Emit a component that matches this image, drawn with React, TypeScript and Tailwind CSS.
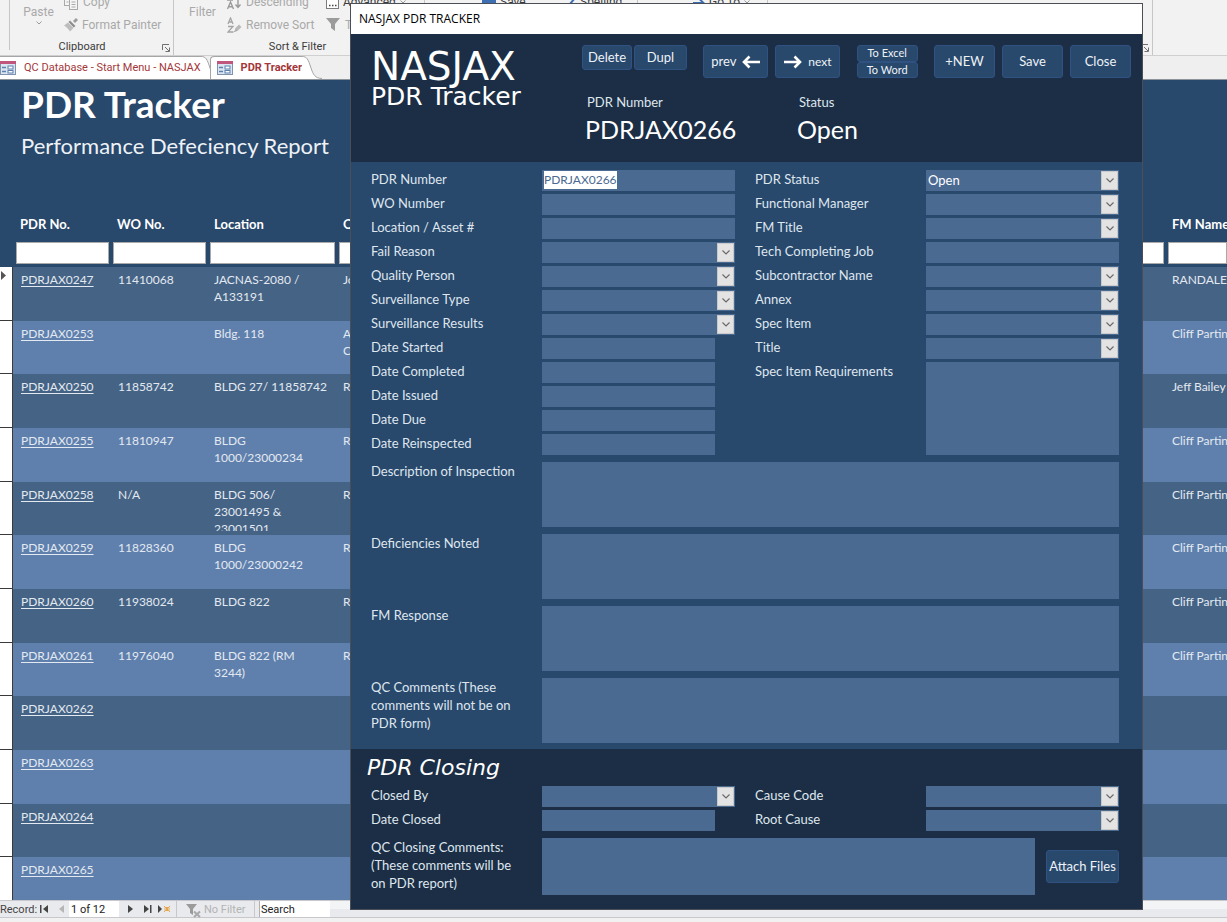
import type { ReactNode } from "react";

const bodyFont = "font-['Lato','Noto_Sans',sans-serif]";
const uiFont = "font-['Roboto','Open_Sans',sans-serif]";
const titleFont = "font-['Open_Sans','Noto_Sans',sans-serif]";
const wideFont = "font-['DejaVu_Sans',sans-serif]";

type Row = { id: string; wo?: string; location?: string; quality?: string; fm?: string };

const rows: Row[] = [
  { id: "PDRJAX0247", wo: "11410068", location: "JACNAS-2080 /\nA133191", quality: "Jo", fm: "RANDALE" },
  { id: "PDRJAX0253", location: "Bldg. 118", quality: "A\nC", fm: "Cliff Partin" },
  { id: "PDRJAX0250", wo: "11858742", location: "BLDG 27/ 11858742", quality: "R", fm: "Jeff Bailey" },
  { id: "PDRJAX0255", wo: "11810947", location: "BLDG\n1000/23000234", quality: "R", fm: "Cliff Partin" },
  { id: "PDRJAX0258", wo: "N/A", location: "BLDG 506/\n23001495 &\n23001501", quality: "R", fm: "Cliff Partin" },
  { id: "PDRJAX0259", wo: "11828360", location: "BLDG\n1000/23000242", quality: "R", fm: "Cliff Partin" },
  { id: "PDRJAX0260", wo: "11938024", location: "BLDG 822", quality: "R", fm: "Cliff Partin" },
  { id: "PDRJAX0261", wo: "11976040", location: "BLDG 822 (RM\n3244)", quality: "R", fm: "Cliff Partin" },
  { id: "PDRJAX0262" },
  { id: "PDRJAX0263" },
  { id: "PDRJAX0264" },
  { id: "PDRJAX0265" },
];

/* ---------- Icons ---------- */

function FormIcon() {
  return (
    <svg width="16" height="16" viewBox="0 0 16 16" className="shrink-0">
      <rect x="0.5" y="1.5" width="15" height="13" fill="#dce6f2" stroke="#7f93ad" />
      <rect x="0" y="1" width="16" height="3" fill="#c0567e" />
      <path d="M2 7.5h4M2 11.5h4" stroke="#5b7fae" strokeWidth="1.4" />
      <rect x="8" y="6" width="5" height="3" fill="#fff" stroke="#5b7fae" />
      <rect x="8" y="10.5" width="5" height="2.5" fill="#fff" stroke="#5b7fae" />
    </svg>
  );
}

function CopyIcon() {
  return (
    <svg width="15" height="16" viewBox="0 0 15 16" fill="#f5f5f5" stroke="#a9a9a9">
      <rect x="0.5" y="0.5" width="8" height="11" />
      <rect x="5.500" y="4.500" width="8" height="11" />
      <path d="M7.500 8h4M7.500 10.500h4M7.500 13h4M2.500 8h2" />
    </svg>
  );
}

function PainterIcon() {
  return (
    <svg width="14" height="14" viewBox="0 0 14 14">
      <path d="M9 3l3-3 2 2-3 3z" fill="#9c9c9c" />
      <path d="M6 2.500l5.500 5.500-1.800 1.500L4.500 4z" fill="#8e8e8e" />
      <path d="M4 4.500L9.500 10 6 13.500C4.500 11 2.500 9 0 7.500z" fill="#bdbdbd" />
    </svg>
  );
}

function DescendingIcon() {
  return (
    <svg width="15" height="16" viewBox="0 0 15 16" fill="none" stroke="#9a9a9a" strokeWidth="1.4">
      <path d="M1 6V1h5L1 6h5" />
      <path d="M0.500 15L3.500 8l3 7M1.500 12.800h4" />
      <path d="M11 1v12M8.500 10.500l2.500 3 2.500-3" />
    </svg>
  );
}

function RemoveSortIcon() {
  return (
    <svg width="15" height="16" viewBox="0 0 15 16" fill="none" stroke="#a4a4a4" strokeWidth="1.3">
      <path d="M1 7L3.500 1 6 7M2 5h3" />
      <path d="M1 9.500h5L1 15h5.500" />
      <path d="M8 11.500l4-4 2.500 2.500-4 4H8z" fill="#b9b9b9" stroke="none" />
      <path d="M7 14.500l3-1" />
    </svg>
  );
}

function FunnelIcon({ crossed = false }: { crossed?: boolean }) {
  return (
    <svg width="15" height="15" viewBox="0 0 15 15" className="shrink-0">
      <path d={crossed ? "M0 1h11L7 6v6l-3-2V6z" : "M0 1h14L9 7v7l-4-3V7z"} fill="#9b9b9b" />
      {crossed && <path d="M8 8.500l6 5.500M14 8.500L8 14" stroke="#a9a9a9" strokeWidth="2" />}
    </svg>
  );
}

function AdvancedIcon() {
  return (
    <svg width="13" height="14" viewBox="0 0 13 14">
      <rect x="0.500" y="0.500" width="12" height="13" fill="#fff" stroke="#7d7d7d" />
      <path d="M3 10.500h1.500M6 10.500h1.500M9 10.500h1.500" stroke="#444" strokeWidth="1.500" />
    </svg>
  );
}

function SaveIcon() {
  return (
    <svg width="14" height="14" viewBox="0 0 14 14">
      <path d="M0 0h14v14H2l-2-2z" fill="#3f6fb3" />
      <path d="M5 8h7v6H5z" fill="#b28ac4" />
    </svg>
  );
}

function SpellingIcon() {
  return (
    <svg width="14" height="14" viewBox="0 0 14 14" fill="none" stroke="#3f6fb3" strokeWidth="2">
      <path d="M1 9l4 3.500L13 3" />
    </svg>
  );
}

function GoToIcon() {
  return (
    <svg width="12" height="12" viewBox="0 0 12 12" fill="none" stroke="#3f6fb3" strokeWidth="2">
      <path d="M0 7h10M6.500 3l4 4-4 4" />
    </svg>
  );
}

function LauncherIcon() {
  return (
    <svg width="8" height="8" viewBox="0 0 8 8" fill="none" stroke="#707070">
      <path d="M0.500 6V0.500H7M3 3l4 4M7.500 3.500v4h-4" />
    </svg>
  );
}

function Caret() {
  return (
    <svg width="6" height="4" viewBox="0 0 6 4" fill="none" stroke="#9a9a9a">
      <path d="M0.500 0.500L3 3l2.500-2.500" />
    </svg>
  );
}

function Arrow({ left = false }: { left?: boolean }) {
  return (
    <svg width="18" height="14" viewBox="0 0 18 14" fill="none" stroke="#fff" strokeWidth="2.600">
      <path d={left ? "M18 7H2M7.500 1.500L2 7l5.500 5.500" : "M0 7h16M10.500 1.500L16 7l-5.500 5.500"} />
    </svg>
  );
}

/* ---------- Ribbon ---------- */

function RibbonGroup({ label, width, children, launcher = false }: { label: string; width: string; children?: ReactNode; launcher?: boolean }) {
  return (
    <section className={`flex h-[70px] shrink-0 flex-col justify-end border-r border-[#c6c6c6] ${width}`}>
      <div className="flex flex-1 items-end">{children}</div>
      <div className="flex h-[15px] items-center pr-[3px] text-[11px] text-[#3b3b3b]">
        <span className={`flex-1 text-center ${launcher ? "pr-2" : ""}`}>{label}</span>
        {launcher && (
          <button aria-label={`${label} options`}>
            <LauncherIcon />
          </button>
        )}
      </div>
    </section>
  );
}

function RibbonItem({ icon, children, dark = false }: { icon: ReactNode; children: ReactNode; dark?: boolean }) {
  return (
    <button className={`flex h-[23px] items-center gap-1 whitespace-nowrap text-[12px] ${dark ? "text-[#3b3b3b]" : "text-[#a9a9a9]"}`}>
      {icon}
      {children}
    </button>
  );
}

function Ribbon() {
  return (
    <header className="flex h-[56px] shrink-0 items-end overflow-hidden border-b border-[#d0d0d0] bg-[#f2f2f2]">
      <div className="h-[50px] w-[10px] shrink-0 self-start border-r border-[#c6c6c6]" />
      <RibbonGroup label="Clipboard" width="w-[164px]" launcher>
        <button className="flex h-[37px] w-[54px] flex-col items-center pl-[3px] text-[12px] leading-[18px] text-[#a9a9a9]">
          Paste
          <Caret />
        </button>
        <div className="flex h-[50px] flex-col">
          <RibbonItem icon={<CopyIcon />}>Copy</RibbonItem>
          <RibbonItem icon={<PainterIcon />}>Format Painter</RibbonItem>
        </div>
      </RibbonGroup>
      <RibbonGroup label="Sort & Filter" width="w-[251px]">
        <button className="flex h-[37px] w-[53px] justify-center pl-1 text-[12px] leading-[18px] text-[#a9a9a9]">Filter</button>
        <div className="flex h-[50px] w-[99px] flex-col">
          <RibbonItem icon={<DescendingIcon />}>Descending</RibbonItem>
          <RibbonItem icon={<RemoveSortIcon />}>Remove Sort</RibbonItem>
        </div>
        <div className="flex h-[50px] flex-col">
          <RibbonItem icon={<AdvancedIcon />} dark>
            Advanced <Caret />
          </RibbonItem>
          <RibbonItem icon={<FunnelIcon />}>Toggle Filter</RibbonItem>
        </div>
      </RibbonGroup>
      <RibbonGroup label="Records" width="w-[213px]">
        <div className="flex h-[50px] items-start pl-[57px]">
          <div className="w-[80px]">
            <RibbonItem icon={<SaveIcon />} dark>Save</RibbonItem>
          </div>
          <RibbonItem icon={<SpellingIcon />} dark>Spelling</RibbonItem>
        </div>
      </RibbonGroup>
      <RibbonGroup label="Find" width="w-[130px]">
        <div className="h-[50px] pl-[55px]">
          <RibbonItem icon={<GoToIcon />} dark>
            Go To <Caret />
          </RibbonItem>
        </div>
      </RibbonGroup>
      <RibbonGroup label="Text Formatting" width="w-[385px]" launcher />
    </header>
  );
}

function TabEdge() {
  return (
    <svg width="20" height="23" viewBox="0 0 20 23" className="shrink-0">
      <path d="M0 0.500C5 0.500 6 3 9 12C11 18 13 22.500 20 22.500V23H0z" fill="#fff" />
      <path d="M0 0.500C5 0.500 6 3 9 12C11 18 13 22.500 20 22.500" fill="none" stroke="#a6a6a6" />
    </svg>
  );
}

function Tabs() {
  return (
    <nav className="flex h-6 shrink-0 items-end border-b border-[#8d939b] bg-[#efefef] text-[11px] text-[#a4373a]">
      <div className="flex items-stretch">
        <button className="flex h-[23px] items-center gap-2 border-t border-[#a6a6a6] bg-white whitespace-nowrap">
          <FormIcon />
          QC Database - Start Menu - NASJAX
        </button>
        <div className="w-[9px] overflow-hidden">
          <TabEdge />
        </div>
      </div>
      <button className="flex h-[23px] items-center gap-2 rounded-tl border-t border-l border-[#a6a6a6] bg-white pl-[6px] font-bold whitespace-nowrap">
        <FormIcon />
        PDR Tracker
      </button>
      <TabEdge />
    </nav>
  );
}

/* ---------- Tracker list ---------- */

function Columns() {
  return (
    <colgroup>
      <col className="w-[13px]" />
      <col className="w-[97px]" />
      <col className="w-[97px]" />
      <col className="w-[129px]" />
      <col />
      <col className="w-[62px]" />
    </colgroup>
  );
}

function TrackerTable() {
  const heads = ["PDR No.", "WO No.", "Location", "Quality Person", "FM Name"];
  return (
    <div className="min-h-0 flex-1 overflow-hidden">
      <table className="w-full table-fixed border-separate border-spacing-0 text-left text-[12px] leading-[17px] text-[#e3e9f1]">
        <Columns />
        <thead className="text-[13px] text-white">
          <tr className="h-[24px]">
            <td />
            {heads.map((h) => (
              <th key={h} className="pl-[7px] align-middle font-bold whitespace-nowrap">
                {h}
              </th>
            ))}
          </tr>
          <tr className="h-[31px]">
            <td />
            {heads.map((h) => (
              <td key={h} className="pt-[6px] pr-px pb-[3px] pl-[3px] last:pr-0">
                <input aria-label={`Filter ${h}`} className="block h-[22px] w-full border border-[#a9a9a9] bg-white px-1 text-black" />
              </td>
            ))}
          </tr>
        </thead>
        <tbody>
          {rows.map((r, i) => (
            <tr key={r.id} className={`${i % 2 === 0 ? "bg-[#456385]" : "bg-[#5f80ad]"} ${i % 3 === 1 ? "h-[53px]" : "h-[54px]"}`}>
              <td className="border-r border-b border-[#3a3a3a] bg-white pt-1 align-top">
                {i === 0 && (
                  <svg width="5" height="9" viewBox="0 0 5 9" className="ml-px">
                    <path d="M0 0l5 4.500L0 9z" fill="#555" />
                  </svg>
                )}
              </td>
              <td className="p-0 pt-[4px] pl-[8px] align-top">
                <a href={`#${r.id}`} className="underline underline-offset-2">
                  {r.id}
                </a>
              </td>
              <td className="p-0 pt-[4px] pl-[8px] align-top">{r.wo}</td>
              <td className="p-0 pt-[4px] pl-[7px] align-top">
                <div className="max-h-[45px] overflow-hidden whitespace-pre-line">{r.location}</div>
              </td>
              <td className="p-0 pt-[4px] pl-[7px] align-top whitespace-pre-line">{r.quality}</td>
              <td className="p-0 pt-[4px] pl-[7px] align-top whitespace-nowrap">{r.fm}</td>
            </tr>
          ))}
        </tbody>
      </table>
    </div>
  );
}

function RecordBar() {
  return (
    <footer className={`flex h-[22px] shrink-0 flex-col bg-[#f1f1f1] text-[11px] text-[#444] ${uiFont}`}>
      <div className="flex h-[18px] items-center border-t border-b border-[#c8c8cc] bg-[#e9eaed]">
        <span className="w-9 pt-[2px] whitespace-nowrap">Record:</span>
        <button aria-label="First record" className="ml-1">
          <svg width="9" height="8" viewBox="0 0 9 8" fill="#444">
            <path d="M0 0h1.500v8H0zM8 0v8L3 4z" />
          </svg>
        </button>
        <button aria-label="Previous record" className="ml-[10px]">
          <svg width="5" height="8" viewBox="0 0 5 8" fill="#b5b5b5">
            <path d="M5 0v8L0 4z" />
          </svg>
        </button>
        <input aria-label="Current record" defaultValue="1 of 12" className="ml-[5px] h-4 w-[50px] bg-white pt-[2px] pl-[2px] text-[11px] text-[#222]" />
        <button aria-label="Next record" className="ml-[9px]">
          <svg width="5" height="8" viewBox="0 0 5 8" fill="#444">
            <path d="M0 0v8l5-4z" />
          </svg>
        </button>
        <button aria-label="Last record" className="ml-[11px]">
          <svg width="8" height="8" viewBox="0 0 8 8" fill="#444">
            <path d="M0 0v8l5-4zM6 0h1.500v8H6z" />
          </svg>
        </button>
        <button aria-label="New record" className="ml-[6px]">
          <svg width="13" height="8" viewBox="0 0 13 8">
            <path d="M0 0v8l4-4z" fill="#444" />
            <path d="M6 1l6 6M12 1L6 7M7 2.500h4v3H7z" stroke="#e5a850" fill="none" />
          </svg>
        </button>
        <button className="ml-[5px] flex h-4 w-[79px] items-center gap-[3px] border-x border-[#c8c8cc] pt-[2px] pl-[9px] whitespace-nowrap text-[#b3b3b3]">
          <FunnelIcon crossed />
          No Filter
        </button>
        <input aria-label="Search" defaultValue="Search" className="ml-1 h-4 w-[71px] border-l border-[#b0b0b0] bg-white pt-[2px] pl-[1px] text-[11px] text-[#222]" />
        <div className="h-2 flex-1 self-start bg-[#f3f4f6]" />
      </div>
    </footer>
  );
}

/* ---------- Dialog ---------- */

const slug = (s: string) => s.toLowerCase().replace(/[^a-z]+/g, "-");

function DialogButton({ children, size }: { children: ReactNode; size: string }) {
  return (
    <button className={`flex shrink-0 items-center justify-center gap-[6px] rounded-[3px] border border-[#2f5283] bg-[#28486c] whitespace-nowrap text-[#eef2f7] ${size}`}>
      {children}
    </button>
  );
}

type FieldKind = "text" | "selected" | "select" | "date";

function Field({ label, kind, value = "" }: { label: string; kind: FieldKind; value?: string }) {
  const id = slug(label);
  return (
    <div className="flex h-[21px]">
      <label htmlFor={id} className="w-[171px] shrink-0 leading-[18px] whitespace-nowrap">
        {label}
      </label>
      {kind === "select" && (
        <div className="relative min-w-0 flex-1">
          <select id={id} className="block h-full w-full appearance-none bg-[#4b6a92] pl-[2px] text-white outline-none">
            <option>{value}</option>
          </select>
          <span className="pointer-events-none absolute top-px right-px flex h-[19px] w-[17px] items-center justify-center border border-[#c9c9c9] bg-[#e3e3e3]">
            <svg width="8" height="5" viewBox="0 0 8 5" fill="none" stroke="#6a6a6a" strokeWidth="1.200">
              <path d="M0.500 0.500L4 4l3.500-3.500" />
            </svg>
          </span>
        </div>
      )}
      {kind === "selected" && (
        <div className="flex min-w-0 flex-1 items-start bg-[#4b6a92] px-[2px] pt-px">
          <input id={id} defaultValue={value} className="h-[18px] w-[73px] bg-white text-[12px] text-[#4b6a92] outline-none" />
        </div>
      )}
      {kind === "text" && <input id={id} className="block min-w-0 flex-1 bg-[#4b6a92] px-[2px]" />}
      {kind === "date" && <input id={id} className="mr-5 block min-w-0 flex-1 bg-[#4b6a92] px-[2px]" />}
    </div>
  );
}

function Memo({ label, height }: { label: string; height: string }) {
  const id = slug(label);
  return (
    <div className="flex min-w-0 flex-1">
      <label htmlFor={id} className="w-[171px] shrink-0 pr-5 leading-[18px]">
        {label}
      </label>
      <textarea id={id} className={`block min-w-0 flex-1 resize-none bg-[#4b6a92] ${height}`} />
    </div>
  );
}

function DialogHeader() {
  return (
    <div className="flex h-[128px] bg-[#1b2e45] pt-[11px] pr-[11px] pl-5">
      <div className={`w-[211px] shrink-0 text-white ${wideFont}`}>
        <h2 className="pt-px text-[39px] leading-[42px]">NASJAX</h2>
        <p className="text-[25px] leading-[18px]">PDR Tracker</p>
      </div>
      <div className="flex-1">
        <div className="flex h-[33px] justify-between">
          <div className="flex gap-[2px]">
            <DialogButton size="h-[25px] w-[50px]">Delete</DialogButton>
            <DialogButton size="h-[25px] w-[53px]">Dupl</DialogButton>
          </div>
          <div className="flex gap-[7px]">
            <DialogButton size="h-[33px] w-[65px]">
              prev <Arrow left />
            </DialogButton>
            <DialogButton size="h-[33px] w-[65px] text-[12px]">
              <Arrow /> next
            </DialogButton>
          </div>
          <div className="flex flex-col">
            <DialogButton size="h-[17px] w-[61px] text-[11px]">To Excel</DialogButton>
            <DialogButton size="h-[16px] w-[61px] text-[11px]">To Word</DialogButton>
          </div>
          <div className="flex gap-[7px]">
            <DialogButton size="h-[33px] w-[61px]">+NEW</DialogButton>
            <DialogButton size="h-[33px] w-[61px]">Save</DialogButton>
            <DialogButton size="h-[33px] w-[61px]">Close</DialogButton>
          </div>
        </div>
        <dl className="flex pt-[15px] pl-[3px]">
          <div className="w-[212px]">
            <dt className="pl-[2px] leading-[18px]">PDR Number</dt>
            <dd className="text-[25px] leading-[36px] text-white">PDRJAX0266</dd>
          </div>
          <div>
            <dt className="pl-[2px] leading-[18px]">Status</dt>
            <dd className="text-[25px] leading-[36px] text-white">Open</dd>
          </div>
        </dl>
      </div>
    </div>
  );
}

function TrackerDialog() {
  return (
    <div role="dialog" aria-label="NASJAX PDR Tracker" className="absolute top-[3px] right-[84px] left-[350px] border border-[#4a4f57] text-[13px] text-[#dfe6ee]">
      <div className={`flex h-[30px] items-center bg-white px-2 text-[12px] text-black ${titleFont}`}>NASJAX PDR TRACKER</div>
      <DialogHeader />
      <div className="bg-[#28486c] pt-2 pr-[23px] pb-[6px] pl-5">
        <div className="flex gap-5">
          <div className="flex flex-1 flex-col gap-[3px]">
            <Field label="PDR Number" kind="selected" value="PDRJAX0266" />
            <Field label="WO Number" kind="text" />
            <Field label="Location / Asset #" kind="text" />
            <Field label="Fail Reason" kind="select" />
            <Field label="Quality Person" kind="select" />
            <Field label="Surveillance Type" kind="select" />
            <Field label="Surveillance Results" kind="select" />
            <Field label="Date Started" kind="date" />
            <Field label="Date Completed" kind="date" />
            <Field label="Date Issued" kind="date" />
            <Field label="Date Due" kind="date" />
            <Field label="Date Reinspected" kind="date" />
          </div>
          <div className="flex flex-1 flex-col gap-[3px]">
            <Field label="PDR Status" kind="select" value="Open" />
            <Field label="Functional Manager" kind="select" />
            <Field label="FM Title" kind="select" />
            <Field label="Tech Completing Job" kind="text" />
            <Field label="Subcontractor Name" kind="select" />
            <Field label="Annex" kind="select" />
            <Field label="Spec Item" kind="select" />
            <Field label="Title" kind="select" />
            <Memo label="Spec Item Requirements" height="h-[93px]" />
          </div>
        </div>
        <div className="flex flex-col gap-[7px] pt-[7px]">
          <Memo label="Description of Inspection" height="h-[65px]" />
          <Memo label="Deficiencies Noted" height="h-[65px]" />
          <Memo label="FM Response" height="h-[65px]" />
          <Memo label="QC Comments (These comments will not be on PDR form)" height="h-[65px]" />
        </div>
      </div>
      <div className="bg-[#1b2e45] pr-[23px] pb-[14px] pl-5">
        <h3 className={`-ml-1 h-[37px] text-[22px] leading-[37px] text-white italic ${wideFont}`}>PDR Closing</h3>
        <div className="flex gap-5">
          <div className="flex flex-1 flex-col gap-[3px]">
            <Field label="Closed By" kind="select" />
            <Field label="Date Closed" kind="date" />
          </div>
          <div className="flex flex-1 flex-col gap-[3px]">
            <Field label="Cause Code" kind="select" />
            <Field label="Root Cause" kind="select" />
          </div>
        </div>
        <div className="flex items-center gap-[11px] pt-[7px]">
          <Memo label="QC Closing Comments: (These comments will be on PDR report)" height="h-[57px]" />
          <DialogButton size="h-[33px] w-[73px]">Attach Files</DialogButton>
        </div>
      </div>
    </div>
  );
}

export default function App() {
  return (
    <div className={`relative flex h-screen flex-col overflow-hidden bg-[#f1f1f1] ${bodyFont}`}>
      <div className={`shrink-0 ${uiFont}`}>
        <Ribbon />
        <Tabs />
      </div>
      <main className="flex min-h-0 flex-1 flex-col bg-[#28486c]">
        <div className="h-[132px] shrink-0 pl-[21px] text-white">
          <h1 className="pb-px text-[37px] leading-[48px] font-bold">PDR Tracker</h1>
          <p className="text-[22px] leading-[34px] text-[#eef2f7]">Performance Defeciency Report</p>
        </div>
        <TrackerTable />
      </main>
      <RecordBar />
      <TrackerDialog />
    </div>
  );
}
